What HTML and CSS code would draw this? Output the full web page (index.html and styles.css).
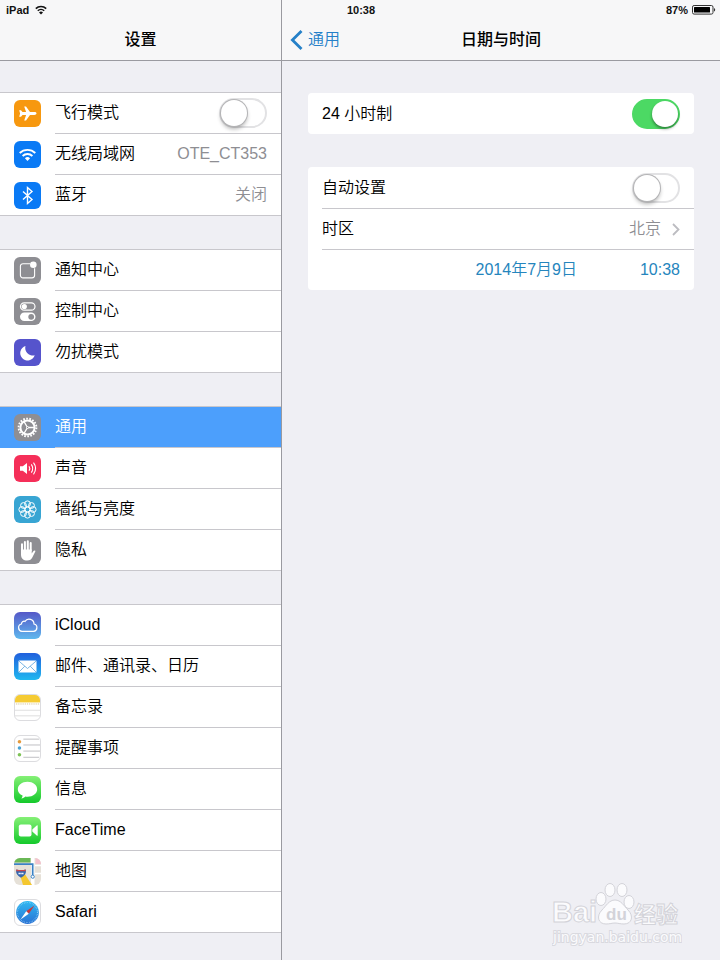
FILE: index.html
```html
<!DOCTYPE html>
<html lang="zh-CN">

<head>
    <meta charset="UTF-8">
    <meta name="viewport" content="width=device-width, initial-scale=1.0">
    <title>设置</title>
    <link rel="stylesheet" href="styles.css">
</head>

<body>
    <div class="screen">
        <div class="status-bar">
            <div class="status-left">
                <span>iPad</span>
                <svg width="12" height="10" viewBox="0 0 12 10" fill="none" stroke="#111" stroke-width="1.6">
                    <path d="M0.8 3.6a7.4 7.4 0 0 1 10.4 0" />
                    <path d="M2.8 5.8a4.6 4.6 0 0 1 6.4 0" />
                    <path d="M6 9.4L4 7.4a2.9 2.9 0 0 1 4 0z" fill="#111" stroke="none" />
                </svg>
            </div>
            <span>10:38</span>
            <div class="status-right">
                <span>87%</span>
                <svg width="24" height="10" viewBox="0 0 24 10">
                    <rect x="0.5" y="0.5" width="20.5" height="8.6" rx="1.6" fill="none" stroke="#333" />
                    <rect x="2" y="2" width="16" height="5.6" rx="0.5" fill="#000" />
                    <path d="M22 3c1.6 0.4 1.6 3.2 0 3.6z" fill="#333" />
                </svg>
            </div>
        </div>

        <aside class="sidebar">
            <header class="navbar">
                <h1>设置</h1>
            </header>

            <nav>
                <ul class="group">
                    <li>
                        <label class="row" for="airplane">
                            <svg class="icon orange" viewBox="0 0 27 27">
                                <path fill="#fff" d="M22.500 13.500c0 0.900-1 1.400-2.200 1.400h-4.300l-4 5.600h-1.800l1.900-5.600H8.500L7 16.700H5.200l0.900-3.200-0.900-3.200H7l1.500 1.800h3.600l-1.900-5.600H12l4 5.600h4.300c1.200 0 2.200 0.500 2.200 1.400z" />
                            </svg>
                            <span class="row-body">
                                <span class="label">飞行模式</span>
                                <input type="checkbox" class="switch" id="airplane">
                            </span>
                        </label>
                    </li>
                    <li>
                        <a class="row" href="#">
                            <svg class="icon blue" viewBox="0 0 27 27" fill="none" stroke="#fff" stroke-width="1.900">
                                <path d="M5.700 12a11.200 11.200 0 0 1 15.600 0" />
                                <path d="M8.600 15a7 7 0 0 1 9.800 0" />
                                <path d="M13.500 20l-2.600-2.700a3.800 3.800 0 0 1 5.200 0z" fill="#fff" stroke="none" />
                            </svg>
                            <span class="row-body">
                                <span class="label">无线局域网</span>
                                <span class="value">OTE_CT353</span>
                            </span>
                        </a>
                    </li>
                    <li>
                        <a class="row" href="#">
                            <svg class="icon blue" viewBox="0 0 27 27" fill="none" stroke="#fff" stroke-width="1.400">
                                <path d="M9 9.500l9 8-4.500 4V5.500l4.500 4-9 8" />
                            </svg>
                            <span class="row-body">
                                <span class="label">蓝牙</span>
                                <span class="value">关闭</span>
                            </span>
                        </a>
                    </li>
                </ul>

                <ul class="group">
                    <li>
                        <a class="row" href="#">
                            <svg class="icon gray" viewBox="0 0 27 27">
                                <path d="M16 6.700H9a2.600 2.600 0 0 0-2.600 2.600v9A2.600 2.600 0 0 0 9 20.900h9a2.600 2.600 0 0 0 2.600-2.600v-7" fill="none" stroke="#fff" stroke-width="1.100" />
                                <circle cx="19.300" cy="7.800" r="3.300" fill="#fff" />
                            </svg>
                            <span class="row-body"><span class="label">通知中心</span></span>
                        </a>
                    </li>
                    <li>
                        <a class="row" href="#">
                            <svg class="icon gray" viewBox="0 0 27 27">
                                <rect x="6.500" y="4.800" width="14.500" height="7.400" rx="3.700" fill="none" stroke="#fff" stroke-width="1.200" />
                                <circle cx="10.300" cy="8.500" r="2.600" fill="#fff" />
                                <rect x="6" y="14.500" width="15.500" height="8.600" rx="4.300" fill="#fff" />
                                <circle cx="17.200" cy="18.800" r="2.900" fill="#8e8e93" />
                            </svg>
                            <span class="row-body"><span class="label">控制中心</span></span>
                        </a>
                    </li>
                    <li>
                        <a class="row" href="#">
                            <svg class="icon purple" viewBox="0 0 27 27">
                                <path d="M11.500 7a7.400 7.400 0 1 0 9.200 9.300A7.600 7.600 0 0 1 11.500 7z" fill="#fff" />
                            </svg>
                            <span class="row-body"><span class="label">勿扰模式</span></span>
                        </a>
                    </li>
                </ul>

                <ul class="group">
                    <li>
                        <a class="row selected" href="#">
                            <svg class="icon gray" viewBox="0 0 27 27" fill="none" stroke="#fff">
                                <circle cx="13.500" cy="13.500" r="8.900" stroke-width="1.900" stroke-dasharray="1.700 1.407" />
                                <circle cx="13.500" cy="13.500" r="7.100" stroke-width="2" />
                                <path d="M13.500 13.500H20M13.500 13.500L10.200 7.800M13.500 13.500L10.200 19.200" stroke-width="1.300" />
                                <circle cx="13.500" cy="13.500" r="1" fill="#8e8e93" />
                            </svg>
                            <span class="row-body"><span class="label">通用</span></span>
                        </a>
                    </li>
                    <li>
                        <a class="row" href="#">
                            <svg class="icon red" viewBox="0 0 27 27" fill="none" stroke="#fff" stroke-width="1.100">
                                <path d="M6 11.200h2.800L13 8v11l-4.200-3.200H6z" fill="#fff" stroke="none" />
                                <path d="M15 11.200q1.600 2.300 0 4.600M17.300 9.400q2.900 4.100 0 8.200M19.500 7.700q4.300 5.800 0 11.600" />
                            </svg>
                            <span class="row-body"><span class="label">声音</span></span>
                        </a>
                    </li>
                    <li>
                        <a class="row" href="#">
                            <svg class="icon cyan" viewBox="0 0 27 27" fill="none" stroke="#fff" stroke-width="1">
                                <circle cx="13.500" cy="7.800" r="2.900" />
                                <circle cx="17.500" cy="9.500" r="2.900" />
                                <circle cx="19.200" cy="13.500" r="2.900" />
                                <circle cx="17.500" cy="17.500" r="2.900" />
                                <circle cx="13.500" cy="19.200" r="2.900" />
                                <circle cx="9.500" cy="17.500" r="2.900" />
                                <circle cx="7.800" cy="13.500" r="2.900" />
                                <circle cx="9.500" cy="9.500" r="2.900" />
                                <circle cx="13.500" cy="13.500" r="2.400" />
                            </svg>
                            <span class="row-body"><span class="label">墙纸与亮度</span></span>
                        </a>
                    </li>
                    <li>
                        <a class="row" href="#">
                            <svg class="icon gray" viewBox="0 0 27 27" fill="none" stroke="#fff" stroke-width="2" stroke-linecap="round">
                                <path d="M8 14V7.200M10.900 13V4.900M13.800 13V4.300M16.700 13.500V6" />
                                <path d="M7 12.500h10.700v4l1.800-2.500c0.700-1 2.300-0.700 1.800 0.500l-3 6c-1 2-2.300 3-5 3C9.500 23.500 7 21.500 7 17.500z" fill="#fff" stroke="none" />
                            </svg>
                            <span class="row-body"><span class="label">隐私</span></span>
                        </a>
                    </li>
                </ul>

                <ul class="group">
                    <li>
                        <a class="row" href="#">
                            <svg class="icon icloud" viewBox="0 0 27 27">
                                <path d="M8 19.300a3.700 3.700 0 0 1-0.500-7.300 2.600 2.600 0 0 1 3.500-2.600 4.900 4.900 0 0 1 9 2.600 3.700 3.700 0 0 1-0.500 7.300z" fill="none" stroke="#fff" stroke-width="1.200" />
                            </svg>
                            <span class="row-body"><span class="label">iCloud</span></span>
                        </a>
                    </li>
                    <li>
                        <a class="row" href="#">
                            <svg class="icon mail" viewBox="0 0 27 27">
                                <rect x="4.500" y="7.500" width="18" height="12" rx="1" fill="#fff" />
                                <path d="M4.800 8l8.700 7.500L22.200 8M4.800 19.200l6-6M22.200 19.200l-6-6" fill="none" stroke="#5ba3dc" stroke-width="0.800" />
                            </svg>
                            <span class="row-body"><span class="label">邮件、通讯录、日历</span></span>
                        </a>
                    </li>
                    <li>
                        <a class="row" href="#">
                            <svg class="icon paper" viewBox="0 0 27 27">
                                <rect width="27" height="8" fill="#f5cb33" />
                                <path d="M1 9.700h25" stroke="#c9b070" stroke-dasharray="1 1" stroke-width="0.900" />
                                <path d="M0 16.500h27M0 22.500h27" stroke="#d4d4d4" stroke-width="0.800" />
                            </svg>
                            <span class="row-body"><span class="label">备忘录</span></span>
                        </a>
                    </li>
                    <li>
                        <a class="row" href="#">
                            <svg class="icon paper" viewBox="0 0 27 27">
                                <path d="M9 3.400h17M9 9.700h18M9 16.300h18M9 23h17" stroke="#b4b4b8" stroke-width="0.900" />
                                <circle cx="4.800" cy="6.300" r="1.900" fill="#e59a3c" />
                                <circle cx="4.800" cy="13" r="1.900" fill="#4aa3d4" />
                                <circle cx="4.800" cy="20.300" r="1.900" fill="#7dc255" />
                            </svg>
                            <span class="row-body"><span class="label">提醒事项</span></span>
                        </a>
                    </li>
                    <li>
                        <a class="row" href="#">
                            <svg class="icon green" viewBox="0 0 27 27">
                                <path d="M13.500 5.800c5.500 0 9.700 3.300 9.700 7.500s-4.200 7.500-9.700 7.500c-0.800 0-1.500 0-2.200-0.200-1 1-2.300 1.700-3.900 1.900 0.800-0.900 1.200-1.800 1.200-2.900-3-1.300-4.800-3.700-4.800-6.300 0-4.200 4.200-7.500 9.700-7.500z" fill="#fff" />
                            </svg>
                            <span class="row-body"><span class="label">信息</span></span>
                        </a>
                    </li>
                    <li>
                        <a class="row" href="#">
                            <svg class="icon green" viewBox="0 0 27 27" fill="#fff">
                                <rect x="4.800" y="7.500" width="12.700" height="12" rx="2" />
                                <path d="M18.300 12.500l4.700-4.200c0.400-0.300 0.700 0 0.700 0.500v9.400c0 0.500-0.300 0.800-0.700 0.500l-4.700-4.200z" />
                            </svg>
                            <span class="row-body"><span class="label">FaceTime</span></span>
                        </a>
                    </li>
                    <li>
                        <a class="row" href="#">
                            <svg class="icon" viewBox="0 0 27 27">
                                <rect width="27" height="27" fill="#e6e1d8" />
                                <path d="M0 0h16.500v4.500H0z" fill="#6ab856" />
                                <path d="M21.500 0H27v6h-5.500z" fill="#f3c1cc" />
                                <path d="M21 7.500h6M21 15.500h6" stroke="#fff" stroke-width="1.500" />
                                <path d="M17 0h3.500v27H17z" fill="#fff" />
                                <path d="M6 17l4.500-1.500L18 27H9z" fill="#f4c72f" />
                                <path d="M0 6.200h18.700v11" fill="none" stroke="#3b82c4" stroke-width="1.700" />
                                <path d="M2.300 11.500q5 1.200 9.400 0 1.500 5-4.700 8.200-6-3-4.700-8.200z" fill="#3767ae" />
                                <path d="M2.300 11.500q5 1.200 9.400 0v1.700H2.300z" fill="#c8474c" />
                                <path d="M4.500 15.500h5" stroke="#fff" stroke-width="1.500" stroke-dasharray="1.400 0.400" />
                                <circle cx="18.700" cy="18.700" r="1.600" fill="#fff" stroke="#3b82c4" />
                            </svg>
                            <span class="row-body"><span class="label">地图</span></span>
                        </a>
                    </li>
                    <li>
                        <a class="row" href="#">
                            <svg class="icon paper" viewBox="0 0 27 27">
                                <defs>
                                    <linearGradient id="compass" x1="0" y1="0" x2="0" y2="1">
                                        <stop offset="0" stop-color="#2fb9f2" />
                                        <stop offset="1" stop-color="#2a72d4" />
                                    </linearGradient>
                                </defs>
                                <circle cx="13.500" cy="13.500" r="12.300" fill="url(#compass)" />
                                <circle cx="13.500" cy="13.500" r="10.800" fill="none" stroke="#a8dcf7" stroke-width="1.200" stroke-dasharray="0.500 1.300" />
                                <path d="M21 6l-6.100 8.900-2.800-2.800z" fill="#c8393b" />
                                <path d="M6 21l6.100-8.900 2.800 2.800z" fill="#fff" />
                            </svg>
                            <span class="row-body"><span class="label">Safari</span></span>
                        </a>
                    </li>
                </ul>
            </nav>
        </aside>

        <main class="detail">
            <header class="navbar">
                <a class="back" href="#">
                    <svg width="13" height="20" viewBox="0 0 13 20" fill="none" stroke="#2580c8" stroke-width="2.800">
                        <path d="M11.500 1L2.400 10l9.100 9" />
                    </svg>
                    通用
                </a>
                <h2>日期与时间</h2>
            </header>

            <div class="cards">
                <div class="card">
                    <label class="card-row" for="hours24">
                        <span>24 小时制</span>
                        <input type="checkbox" class="switch" id="hours24" checked>
                    </label>
                </div>

                <div class="card">
                    <label class="card-row" for="auto">
                        <span>自动设置</span>
                        <input type="checkbox" class="switch" id="auto">
                    </label>
                    <a class="card-row" href="#">
                        <span>时区</span>
                        <span class="value zone">
                            北京
                            <svg width="8" height="13" viewBox="0 0 8 13" fill="none" stroke="#bcbcc1" stroke-width="1.800">
                                <path d="M1 1l5.500 5.500L1 12" />
                            </svg>
                        </span>
                    </a>
                    <button type="button" class="card-row date-row">
                        <span>2014年7月9日</span>
                        <span>10:38</span>
                    </button>
                </div>
            </div>
        </main>

        <div class="watermark">
            <svg width="130" height="64" viewBox="0 0 130 64">
                <g class="mark">
                    <text x="0" y="40" class="mark-latin">Bai</text>
                    <ellipse cx="49" cy="17" rx="5" ry="6.500" />
                    <ellipse cx="58" cy="8" rx="5" ry="6.500" />
                    <ellipse cx="70" cy="8" rx="5" ry="6.500" />
                    <ellipse cx="77" cy="20" rx="5" ry="6.500" />
                    <path d="M63 18c6 0 9 6 13 10 6 6 4 14-4 14-4 0-6-1-9-1s-5 1-9 1c-8 0-10-8-4-14 4-4 7-10 13-10z" />
                    <text x="82" y="40" class="mark-cjk">经验</text>
                </g>
                <text x="54" y="38" class="mark-du">du</text>
                <text x="1" y="60" class="mark-url">jingyan.baidu.com</text>
            </svg>
        </div>
    </div>
</body>

</html>
```
FILE: styles.css
```css
:root {
    --bar-color: #f7f7f8;
    --background-color: #efeff4;
    --line-color: #c8c7cc;
    --border-color: #9a9aa0;
    --blue: #2585bd;
    --gray: #8e8e93;
    --font-family: 'Liberation Sans', 'Noto Sans CJK SC', sans-serif;
}

* {
    box-sizing: border-box;
}

body {
    font-family: var(--font-family);
    font-size: 16px;
    line-height: 24px;
    font-weight: 350;
    margin: 0;
    background-color: var(--background-color);
    color: #000;
}

a {
    color: inherit;
    text-decoration: none;
}

.screen {
    position: relative;
    display: grid;
    grid-template-columns: 282px 1fr;
    grid-template-rows: 20px 1fr;
    min-height: 100vh;
}

/* the status bar lies across the top of both panes */
.status-bar {
    grid-column: 1 / 3;
    grid-row: 1;
    z-index: 1;
    display: grid;
    grid-template-columns: 1fr auto 1fr;
    align-items: center;
    padding: 0 4px 0 6px;
    font-size: 11px;
    line-height: 20px;
    font-weight: bold;
    color: #111;
}

.status-left,
.status-right {
    display: flex;
    align-items: center;
    gap: 6px;
}

.status-right {
    justify-content: flex-end;
    gap: 4px;
}

.sidebar,
.detail {
    grid-row: 1 / 3;
}

.sidebar {
    grid-column: 1;
    border-right: 1px solid var(--border-color);
}

.detail {
    grid-column: 2;
}

.navbar {
    display: grid;
    grid-template-columns: 1fr auto 1fr;
    align-items: center;
    height: 61px;
    padding: 20px 8px 0;
    background-color: var(--bar-color);
    border-bottom: 1px solid var(--border-color);
}

.navbar h1,
.navbar h2 {
    grid-column: 2;
    margin: 0;
    font-size: 16px;
    font-weight: 500;
}

.back {
    display: flex;
    align-items: center;
    gap: 5px;
    color: #2580c8;
}

/* Sidebar list */
.group {
    list-style: none;
    margin: 31px 0 0;
    padding: 0;
    background-color: #fff;
    border-top: 1px solid var(--line-color);
}

.group + .group {
    margin-top: 33px;
}

.group li:last-child {
    border-bottom: 1px solid var(--line-color);
}

.row {
    display: flex;
    align-items: center;
    gap: 14px;
    padding-left: 14px;
}

.row-body {
    flex: 1;
    display: flex;
    align-items: center;
    justify-content: space-between;
    height: 41px;
    padding-right: 14px;
    border-bottom: 1px solid var(--line-color);
}

.group li:last-child .row-body {
    height: 40px;
    border-bottom: none;
}

.row.selected {
    background-color: #4c9ffc;
    color: #fff;
}

.value {
    color: var(--gray);
}

.icon {
    width: 27px;
    height: 27px;
    border-radius: 6px;
}

.orange {
    background-color: #f7980f;
}

.blue {
    background-color: #0a7af5;
}

.gray {
    background-color: #8e8e93;
}

.purple {
    background-color: #5654cc;
}

.red {
    background-color: #f52f59;
}

.cyan {
    background-color: #38a5d3;
}

.icloud {
    background: linear-gradient(#5558c8, #5fb8ee);
}

.mail {
    background: linear-gradient(#2160dd, #20b8f0);
}

.green {
    background: linear-gradient(#85f076, #14c92b);
}

.paper {
    background-color: #fff;
    border: 1px solid #dcdcdf;
}

/* Switch */
.switch {
    appearance: none;
    width: 48px;
    height: 30px;
    margin: 0;
    border: 2px solid #e2e2e4;
    border-radius: 15px;
    background-color: #fff;
    cursor: pointer;
}

.switch::before {
    content: "";
    display: block;
    width: 26px;
    height: 26px;
    border-radius: 50%;
    background-color: #fff;
    box-shadow: 0 0 0 1px #b4b4b6, 0 3px 4px rgba(0, 0, 0, 0.3);
}

.switch:checked {
    border-color: #4cd964;
    background-color: #4cd964;
}

.switch:checked::before {
    margin-left: 18px;
    box-shadow: 0 2px 3px rgba(0, 0, 0, 0.4);
}

/* Detail pane */
.cards {
    display: flex;
    flex-direction: column;
    gap: 33px;
    padding: 32px 26px;
}

.card {
    background-color: #fff;
    border-radius: 4px;
    padding-left: 14px;
}

.card-row {
    display: flex;
    align-items: center;
    justify-content: space-between;
    height: 41px;
    padding-right: 14px;
}

.card-row + .card-row {
    border-top: 1px solid var(--line-color);
}

.zone {
    display: flex;
    align-items: center;
    gap: 11px;
}

.date-row {
    width: 100%;
    justify-content: flex-end;
    gap: 63px;
    padding: 0 14px 0 0;
    border: none;
    background: none;
    font: inherit;
    color: var(--blue);
}

/* Watermark */
.watermark {
    position: absolute;
    right: 38px;
    bottom: 14px;
}

.watermark svg {
    display: block;
}

.mark {
    fill: #fbfbfd;
    stroke: #d3d3d9;
    stroke-width: 1px;
}

.mark-latin,
.mark-du {
    font-family: 'Liberation Sans', sans-serif;
    font-weight: bold;
}

.mark-latin {
    font-size: 29px;
}

.mark-du {
    font-size: 17px;
    fill: #d3d3d9;
}

.mark-cjk {
    font-family: 'Noto Sans CJK SC', sans-serif;
    font-size: 22px;
    font-weight: bold;
}

.mark-url {
    font-family: 'DejaVu Sans', sans-serif;
    font-size: 14px;
    font-weight: 400;
    fill: #fbfbfd;
    stroke: #d9d9df;
    stroke-width: 2px;
    paint-order: stroke;
}
```
